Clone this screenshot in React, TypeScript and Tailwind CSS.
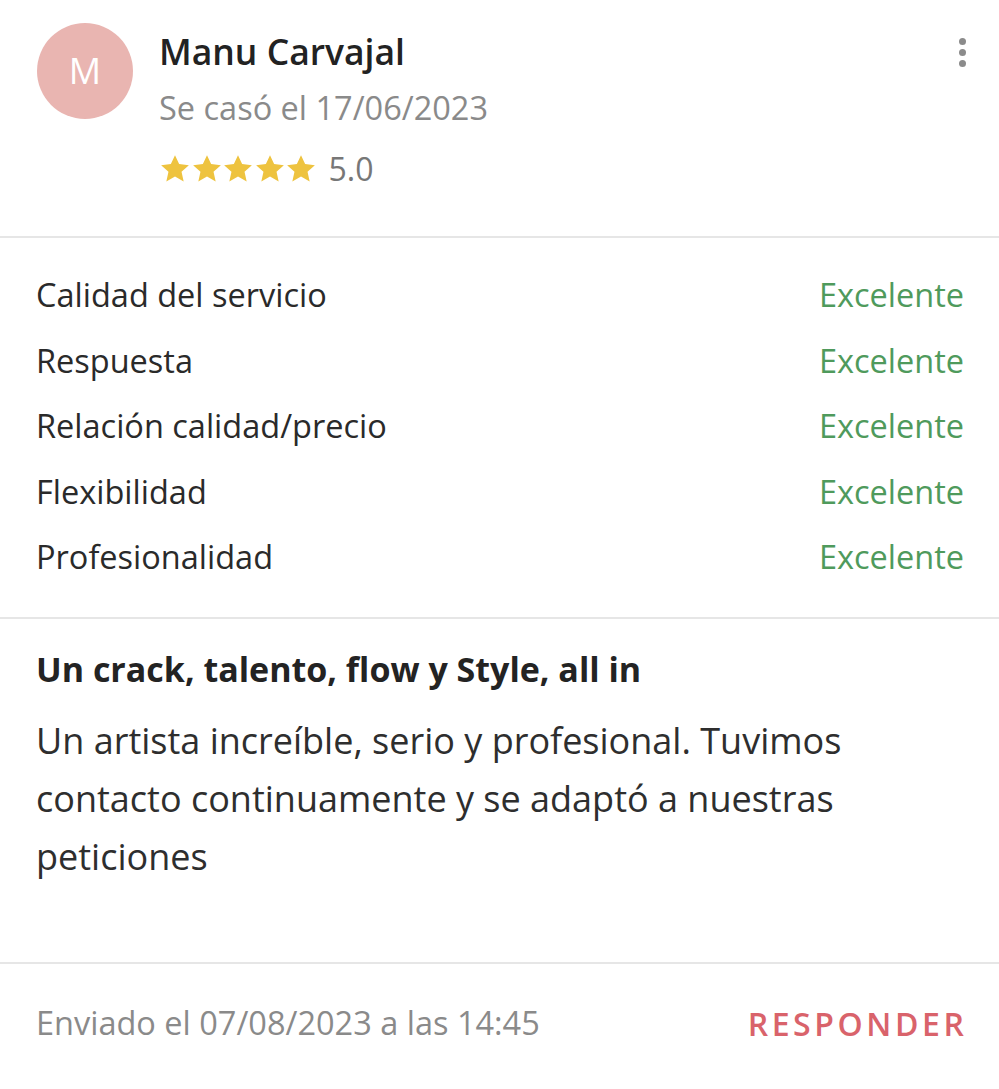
const ratings = [
  'Calidad del servicio',
  'Respuesta',
  'Relación calidad/precio',
  'Flexibilidad',
  'Profesionalidad',
]

function Star() {
  return (
    <svg viewBox="0 0 24 24" className="h-[32px] w-[32px] -mr-[0.5px]" fill="#eec33f">
      <path d="M12 1.6l3.1 6.7 7.3.8-5.5 5 1.6 7.2L12 17.7l-6.5 3.6 1.6-7.2-5.5-5 7.3-.8z" />
    </svg>
  )
}

export default function App() {
  return (
    <div className="w-[999px] h-[1089px] bg-white font-['Open_Sans',sans-serif] text-[#2a2a2a]">
      {/* header */}
      <div className="relative flex gap-[26px] px-[37px] pt-[23px] h-[238px] border-b-2 border-[#e6e6e6]">
        <div className="flex h-[96px] w-[96px] shrink-0 items-center justify-center rounded-full bg-[#e9b5b1] text-[36px] text-white">
          M
        </div>
        <div className="flex flex-col">
          <div className="h-[56px] leading-[56px] text-[35.5px] font-semibold text-[#222]">Manu Carvajal</div>
          <div className="h-[58px] leading-[58px] text-[32.5px] text-[#8a8a8a]">Se casó el 17/06/2023</div>
          <div className="flex h-[64px] items-center gap-[12px]">
            <div className="flex">
              <Star />
              <Star />
              <Star />
              <Star />
              <Star />
            </div>
            <span className="text-[32px] text-[#777]">5.0</span>
          </div>
        </div>
        <div className="absolute right-[33px] top-[38px] flex flex-col gap-[4px]">
          <span className="h-[7px] w-[7px] rounded-full bg-[#8b8b8b]" />
          <span className="h-[7px] w-[7px] rounded-full bg-[#8b8b8b]" />
          <span className="h-[7px] w-[7px] rounded-full bg-[#8b8b8b]" />
        </div>
      </div>

      {/* ratings */}
      <div className="flex flex-col pl-[36px] pr-[35px] pt-[25px] pb-[26px] border-b-2 border-[#e6e6e6]">
        {ratings.map((r) => (
          <div key={r} className="flex h-[65.5px] items-center justify-between text-[32.5px]">
            <span className="text-[#2a2a2a]">{r}</span>
            <span className="text-[#4f9a5c]">Excelente</span>
          </div>
        ))}
      </div>

      {/* review */}
      <div className="px-[36px] pt-[27px] h-[345px] border-b-2 border-[#e6e6e6]">
        <h2 className="h-[46px] leading-[46px] text-[34px] font-bold text-[#232323]">
          Un crack, talento, flow y Style, all in
        </h2>
        <p className="mt-[20px] w-[860px] text-[36px] leading-[58px] text-[#2e2e2e]">
          Un artista increíble, serio y profesional. Tuvimos contacto continuamente y se adaptó a nuestras peticiones
        </p>
      </div>

      {/* footer */}
      <div className="flex items-center justify-between pl-[36px] pr-[35px] h-[120px]">
        <span className="text-[32.5px] text-[#8a8a8a]">Enviado el 07/08/2023 a las 14:45</span>
        <button className="text-[32px] font-semibold tracking-[3.6px] -mr-[3.6px] text-[#d9636b]">RESPONDER</button>
      </div>
    </div>
  )
}
